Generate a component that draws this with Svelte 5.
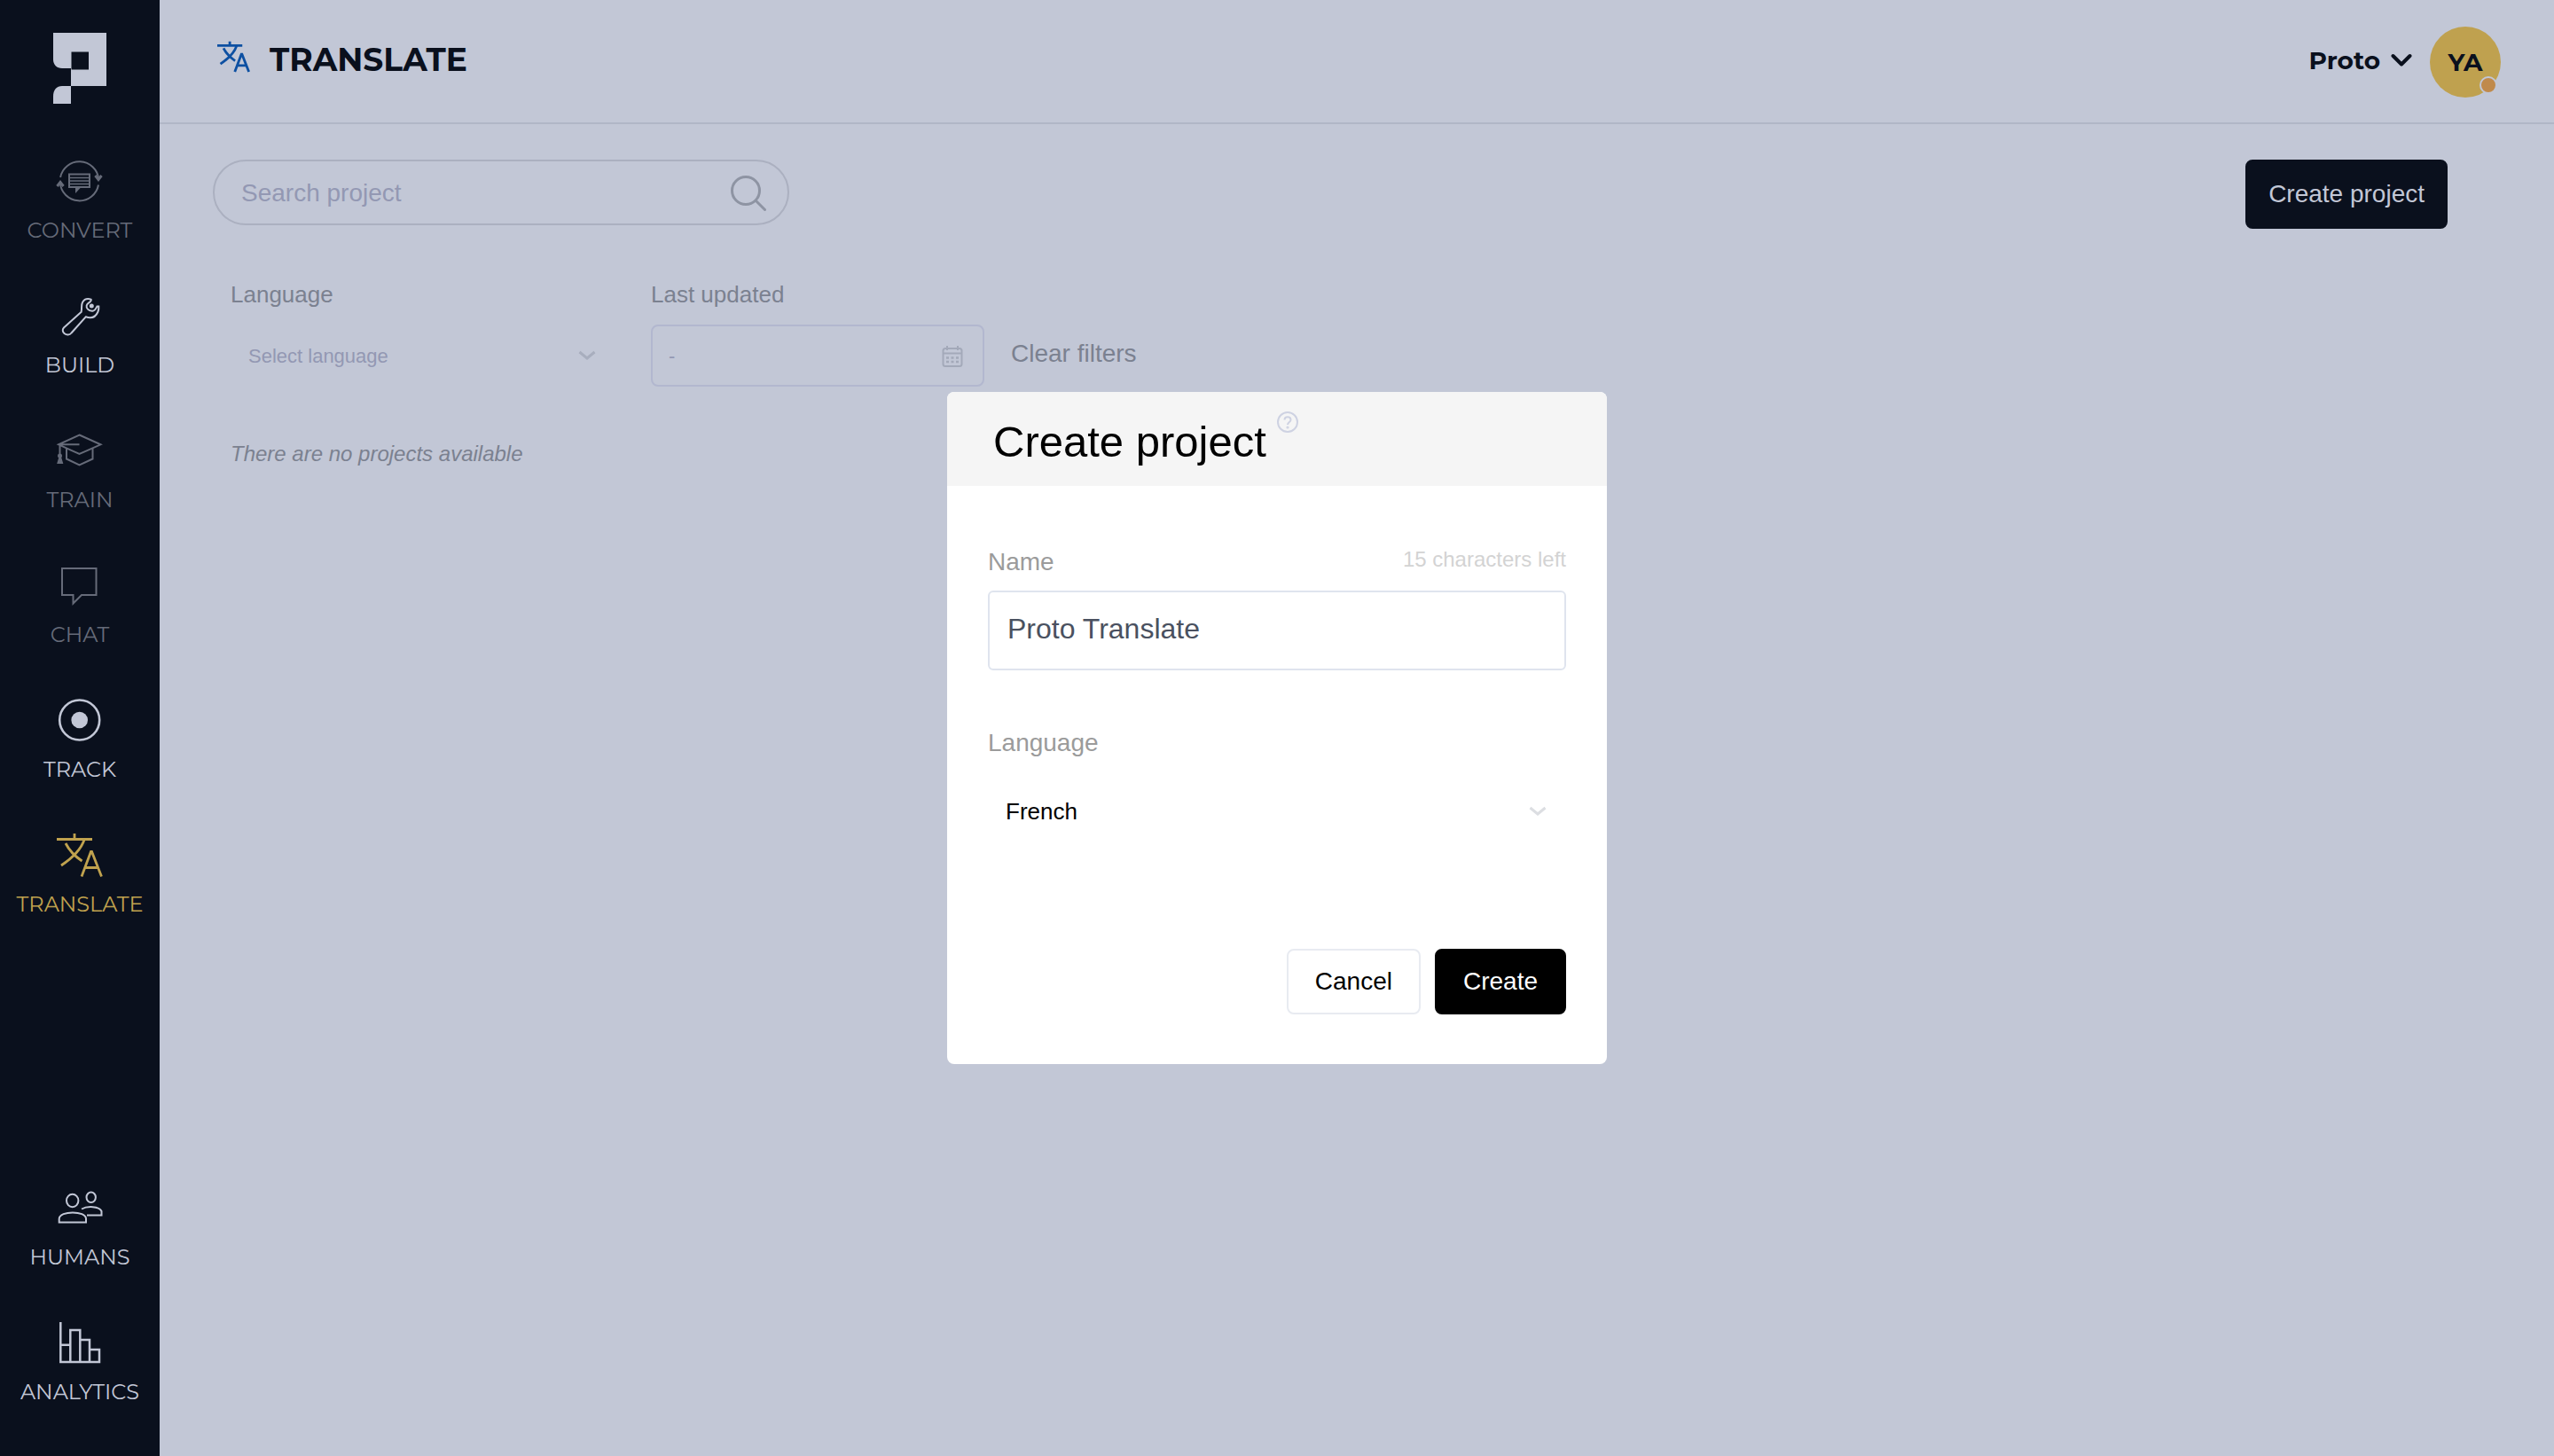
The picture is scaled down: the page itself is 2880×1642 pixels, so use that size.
<script lang="ts">
	type NavItem = { id: string; label: string; state: 'on' | 'dim' | 'active' };

	const mainItems: NavItem[] = [
		{ id: 'convert', label: 'CONVERT', state: 'dim' },
		{ id: 'build', label: 'BUILD', state: 'on' },
		{ id: 'train', label: 'TRAIN', state: 'dim' },
		{ id: 'chat', label: 'CHAT', state: 'dim' },
		{ id: 'track', label: 'TRACK', state: 'on' },
		{ id: 'translate', label: 'TRANSLATE', state: 'active' }
	];

	const bottomItems: NavItem[] = [
		{ id: 'humans', label: 'HUMANS', state: 'on' },
		{ id: 'analytics', label: 'ANALYTICS', state: 'on' }
	];

	let search = $state('');
	let filterLanguage = $state('');
	let dateRange = $state('-');
	let showModal = $state(true);
	let projectName = $state('Proto Translate');
	let projectLanguage = $state('French');

	const charsLeft = $derived(30 - projectName.length);

	function clearFilters() {
		filterLanguage = '';
		dateRange = '-';
	}
</script>

{#snippet translateIcon()}
	<path d="M2 10.500H42M22 4V11M33 11C29 23 19 32 7 40M12 15C16 23 23 30 30.500 35M30 52.500L40.500 24.500H41.500L52.500 52.500M33.500 42.500H49" />
{/snippet}

{#snippet navIcon(id: string)}
	<svg class="nav-icon" viewBox="0 0 56 56" aria-hidden="true">
		{#if id === 'convert'}
			<path d="M6.100 24A21.800 21.800 0 0 1 49.200 26M49 32.500A21.800 21.800 0 0 1 5.800 30" />
			<path d="M45.500 22L49 26.500L52.500 22M2.500 34L6 29.500L9.500 34" stroke-width="3" />
			<path d="M16 20.500H39V35H16Z" />
			<path d="M16 24.500H39M16 28H39M16 31.500H39" stroke-width="1.500" />
			<path d="M23 35H29.500L23 42Z" class="solid" stroke="none" />
		{:else if id === 'build'}
			<path d="M29.700 23.700L10 41.500C8 43.500 8.500 46.500 10.500 48C13 50 16.500 50 18.500 47.500L34.700 29.300C41 31.500 46 29.500 48.500 23.500C49.500 21 49.500 19.500 49.300 17.500H47.500C46.500 19.500 45 23 42 22.700C37.500 22.500 35 19.500 35.700 16.500C36.500 13 41.500 13 40.700 9.700C37 8.500 33 9.500 31 13C29.500 16 30.500 18 29.700 23.700Z" />
			<circle cx="41.300" cy="17" r="2.500" class="solid" stroke="none" />
		{:else if id === 'train'}
			<path d="M27.500 10.500L51.500 21.300L27.500 32L4 21.300ZM27.500 21.300H5.500V34" />
			<path d="M13 25.500V37.500L27.500 44.500L42.500 37.500V25.500" />
			<circle cx="5.500" cy="34" r="1.500" class="solid" />
			<path d="M5 37H6.500L8 42H3.500Z" class="solid" />
		{:else if id === 'chat'}
			<path d="M8 9H46.500V39H30L20.500 48.500V39H8Z" />
		{:else if id === 'track'}
			<circle cx="27.700" cy="28" r="22.500" stroke-width="2.600" />
			<circle cx="27.700" cy="28" r="9.300" class="solid" stroke="none" />
		{:else if id === 'translate'}
			<g stroke-width="2.800">{@render translateIcon()}</g>
		{:else if id === 'humans'}
			<ellipse cx="19.700" cy="20" rx="6.700" ry="7.200" />
			<ellipse cx="40.700" cy="16.300" rx="5.200" ry="5.700" />
			<path d="M4.700 44.500V40.500C5 31 35 31 35 40.500V44.500Z" />
			<path d="M30 29.500C36 26 50 26 52.500 32V36.500H36" />
		{:else}
			<path d="M6.300 5V50H50V36H39V25H28.300V14H17.300V50M28.300 25V50M39 36V50M6.300 30.700H17.300" stroke-width="2.500" />
		{/if}
	</svg>
{/snippet}

{#snippet navLink(item: NavItem)}
	<a class="nav-item {item.state}" href="#{item.id}" aria-current={item.state === 'active' ? 'page' : undefined}>
		{@render navIcon(item.id)}
		<span>{item.label}</span>
	</a>
{/snippet}

{#snippet chevron()}
	<svg class="chevron" viewBox="0 0 20 12" aria-hidden="true"><path d="M1.500 2L10 9L18.500 2" /></svg>
{/snippet}

<div class="layout">
	<aside class="sidebar">
		<a class="logo" href="#home" aria-label="Proto">
			<svg viewBox="0 0 60 80" aria-hidden="true">
				<path d="M0 0H60V60H20V80H0V72C0 64 4 60 10 60H20V40H10C4 40 0 36 0 30ZM20.500 21.500V41.500H40V21.500Z" fill-rule="evenodd" />
			</svg>
		</a>
		<nav>
			{#each mainItems as item}
				{@render navLink(item)}
			{/each}
		</nav>
		<nav class="bottom">
			{#each bottomItems as item}
				{@render navLink(item)}
			{/each}
		</nav>
	</aside>

	<div class="page">
		<header class="topbar">
			<div class="heading">
				<svg class="heading-icon" viewBox="1 3 53 51" aria-hidden="true">{@render translateIcon()}</svg>
				<h1>TRANSLATE</h1>
			</div>
			<div class="account">
				<button class="company">
					Proto
					<svg viewBox="0 0 24 16" aria-hidden="true"><path d="M2.500 3L12 12.500L21.500 3" /></svg>
				</button>
				<button class="avatar" aria-label="YA account">YA<span class="status"></span></button>
			</div>
		</header>

		<main>
			<div class="toolbar">
				<div class="search">
					<input type="text" placeholder="Search project" aria-label="Search project" bind:value={search} />
					<svg viewBox="0 0 40 40" aria-hidden="true">
						<circle cx="17" cy="17" r="15.500" />
						<path d="M28.500 28.500L38.500 38.500" />
					</svg>
				</div>
				<button class="btn create-project" onclick={() => (showModal = true)}>Create project</button>
			</div>

			<div class="filters">
				<div class="filter">
					<label for="filter-language">Language</label>
					<div class="select-wrap small">
						<select id="filter-language" class:empty={filterLanguage === ''} bind:value={filterLanguage}>
							<option value="">Select language</option>
							<option value="French">French</option>
						</select>
						{@render chevron()}
					</div>
				</div>
				<div class="filter date">
					<label for="filter-date">Last updated</label>
					<div class="date-box">
						<input id="filter-date" type="text" bind:value={dateRange} />
						<svg viewBox="0 0 24 24" aria-hidden="true">
							<rect x="1.500" y="3" width="21" height="20" rx="2.500" />
							<path d="M2 8.500H22M6 0V5M18 0V5" />
							<path d="M5 13.500H19M5 18H19" stroke-width="2.500" stroke-dasharray="3 2.500" />
						</svg>
					</div>
				</div>
				<button class="clear" onclick={clearFilters}>Clear filters</button>
			</div>

			<p class="no-projects">There are no projects available</p>
		</main>
	</div>
</div>

{#if showModal}
	<div class="overlay">
		<div class="modal" role="dialog" aria-modal="true" aria-labelledby="modal-title">
			<div class="modal-header">
				<h2 id="modal-title">Create project</h2>
				<svg class="help" viewBox="0 0 24 24" aria-hidden="true">
					<circle cx="12" cy="12" r="11" />
					<path d="M8.500 9.500C8.500 5 15.500 5 15.500 9.500C15.500 12 12 12 12 15" />
					<circle cx="12" cy="18" r="0.600" />
				</svg>
			</div>
			<form class="modal-body" onsubmit={(e) => e.preventDefault()}>
				<div class="field">
					<div class="field-head">
						<label for="project-name">Name</label>
						<span class="counter">{charsLeft} characters left</span>
					</div>
					<input id="project-name" type="text" maxlength="30" bind:value={projectName} />
				</div>
				<div class="field">
					<div class="field-head">
						<label for="project-language">Language</label>
					</div>
					<div class="select-wrap">
						<select id="project-language" bind:value={projectLanguage}>
							<option value="French">French</option>
							<option value="English">English</option>
						</select>
						{@render chevron()}
					</div>
				</div>
				<div class="actions">
					<button type="button" class="btn cancel" onclick={() => (showModal = false)}>Cancel</button>
					<button type="submit" class="btn submit">Create</button>
				</div>
			</form>
		</div>
	</div>
{/if}

<style>
	:global(body) {
		background: #c2c7d6;
		font-family: "Liberation Sans", Arial, sans-serif;
	}

	* {
		box-sizing: border-box;
	}

	button,
	input,
	select {
		font-family: inherit;
		margin: 0;
	}

	button {
		cursor: pointer;
	}

	svg {
		display: block;
		fill: none;
		stroke: currentColor;
		stroke-width: 2;
		flex-shrink: 0;
	}

	.layout {
		display: flex;
		min-height: 100vh;
	}

	/* Sidebar */
	.sidebar {
		display: flex;
		flex-direction: column;
		width: 180px;
		flex-shrink: 0;
		padding: 37px 0 28px;
		background: #0a101d;
		color: #c2c7d6;
	}

	.logo {
		align-self: center;
		margin-bottom: 35px;
		color: inherit;
	}

	.logo svg {
		width: 60px;
		height: 80px;
		fill: currentColor;
		stroke: none;
	}

	.bottom {
		margin-top: auto;
	}

	.nav-item {
		display: flex;
		flex-direction: column;
		align-items: center;
		gap: 13px;
		padding: 24px 0 29px;
		color: #c2c7d6;
		font-family: Montserrat, Inter, sans-serif;
		font-size: 24px;
		font-weight: 400;
		line-height: 30px;
		text-decoration: none;
	}

	.nav-item.dim {
		color: #666b79;
	}

	.nav-item.active {
		color: #c0a24e;
	}

	.nav-icon {
		width: 56px;
		height: 56px;
	}

	.solid {
		fill: currentColor;
	}

	/* Top bar */
	.page {
		flex: 1;
		min-width: 0;
	}

	.topbar {
		display: flex;
		align-items: center;
		justify-content: space-between;
		height: 140px;
		padding: 2px 60px 0 64px;
		border-bottom: 2px solid #b0b6c6;
		color: #0a101d;
		font-family: Montserrat, Inter, sans-serif;
	}

	.heading {
		display: flex;
		align-items: center;
		gap: 22px;
		padding-bottom: 6px;
	}

	.heading-icon {
		width: 38px;
		height: 36px;
		margin-bottom: 6px;
		color: #0d50a2;
		stroke-width: 4;
	}

	h1 {
		margin: 0;
		font-size: 36px;
		font-weight: 700;
		line-height: 44px;
	}

	.account {
		display: flex;
		align-items: center;
		gap: 20px;
	}

	.company {
		display: flex;
		align-items: center;
		gap: 12px;
		padding: 0 0 4px;
		border: 0;
		background: none;
		color: inherit;
		font-size: 28px;
		font-weight: 700;
		line-height: 36px;
	}

	.company svg {
		width: 24px;
		height: 16px;
		stroke-width: 4;
		stroke-linecap: round;
		stroke-linejoin: round;
	}

	.avatar {
		position: relative;
		width: 80px;
		height: 80px;
		padding: 0;
		border: 0;
		border-radius: 50%;
		background: #bfa14f;
		color: inherit;
		font-size: 28px;
		font-weight: 700;
	}

	.status {
		position: absolute;
		right: 4px;
		bottom: 4px;
		width: 20px;
		height: 20px;
		border: 2px solid #c2c7d6;
		border-radius: 50%;
		background: #c08a4c;
	}

	/* Project list */
	main {
		padding: 40px 120px 40px 60px;
	}

	.toolbar {
		display: flex;
		align-items: flex-start;
		justify-content: space-between;
	}

	.search {
		display: flex;
		align-items: center;
		width: 650px;
		height: 74px;
		padding: 2px 24px 0 30px;
		border: 2px solid #abb0c0;
		border-radius: 37px;
		color: #8e94a3;
	}

	.search input {
		flex: 1;
		min-width: 0;
		padding: 0;
		border: 0;
		outline: 0;
		background: none;
		color: #0a101d;
		font-size: 28px;
	}

	.search input::placeholder {
		color: #9398b3;
	}

	.search svg {
		width: 40px;
		height: 40px;
		stroke-width: 3;
		stroke-linecap: round;
	}

	.btn {
		padding: 0 30px;
		height: 74px;
		border: 2px solid #000;
		border-radius: 8px;
		font-size: 28px;
	}

	.create-project {
		height: 78px;
		padding: 0 24px;
		border-color: #0a101d;
		background: #0a101d;
		color: #c2c7d6;
	}

	.filters {
		display: flex;
		align-items: flex-end;
		margin: 58px 0 0 20px;
	}

	.filter {
		display: flex;
		flex-direction: column;
		gap: 18px;
		width: 434px;
		margin-right: 40px;
		color: #7b8190;
		font-size: 26px;
		line-height: 32px;
	}

	.filter.date {
		width: 376px;
		margin-right: 30px;
	}

	.select-wrap {
		display: grid;
		align-items: center;
		height: 90px;
		color: #dcdee2;
	}

	.select-wrap > :global(*) {
		grid-area: 1 / 1;
	}

	.select-wrap.small {
		height: 70px;
		color: #a8aebe;
	}

	select {
		width: 100%;
		height: 100%;
		padding: 0 20px;
		border: 0;
		appearance: none;
		background: none;
		color: #000;
		font-size: 26px;
	}

	.small select {
		font-size: 22px;
	}

	select.empty {
		color: #9398b3;
	}

	.chevron {
		width: 20px;
		height: 12px;
		margin-right: 22px;
		justify-self: end;
		stroke-width: 3;
		pointer-events: none;
	}

	.date-box {
		display: flex;
		align-items: center;
		height: 70px;
		padding: 2px 22px 0 18px;
		border: 2px solid #b2b7cf;
		border-radius: 8px;
		color: #a3a9b9;
	}

	.date-box input {
		flex: 1;
		min-width: 0;
		padding: 0;
		border: 0;
		outline: 0;
		background: none;
		color: #9398b3;
		font-size: 22px;
	}

	.date-box svg {
		width: 24px;
		height: 24px;
	}

	.clear {
		height: 70px;
		padding: 0 0 4px;
		border: 0;
		background: none;
		color: #7b8190;
		font-size: 28px;
	}

	.no-projects {
		margin: 60px 0 0 20px;
		color: #7b8190;
		font-size: 24px;
		font-style: italic;
		line-height: 32px;
	}

	/* Modal */
	.overlay {
		position: fixed;
		inset: 0;
		display: flex;
		align-items: center;
		justify-content: center;
	}

	.modal {
		width: 744px;
		max-width: 100%;
		overflow: hidden;
		border-radius: 8px;
		background: #fff;
	}

	.modal-header {
		display: flex;
		align-items: flex-start;
		gap: 12px;
		padding: 22px 50px 16px 52px;
		background: #f5f5f5;
	}

	h2 {
		margin: 0;
		color: #000;
		font-size: 49px;
		font-weight: 400;
		line-height: 68px;
	}

	.help {
		width: 24px;
		height: 24px;
		color: #ced2e2;
	}

	.modal-body {
		padding: 70px 46px 56px;
	}

	.field + .field {
		margin-top: 66px;
	}

	.field-head {
		display: flex;
		align-items: flex-start;
		justify-content: space-between;
		margin-bottom: 16px;
		color: #9b9b9b;
		font-size: 28px;
		line-height: 32px;
	}

	.counter {
		color: #d3d3d3;
		font-size: 24px;
		line-height: 26px;
	}

	.field input {
		display: block;
		width: 100%;
		height: 90px;
		padding: 0 20px 4px;
		border: 2px solid #dfe4ee;
		border-radius: 6px;
		outline: 0;
		background: #fff;
		color: #4a5160;
		font-size: 32px;
	}

	.actions {
		display: flex;
		justify-content: flex-end;
		gap: 16px;
		margin-top: 110px;
	}

	.cancel {
		border-color: #e8ebf1;
		background: #fff;
		color: #000;
	}

	.submit {
		background: #000;
		color: #fff;
	}
</style>
